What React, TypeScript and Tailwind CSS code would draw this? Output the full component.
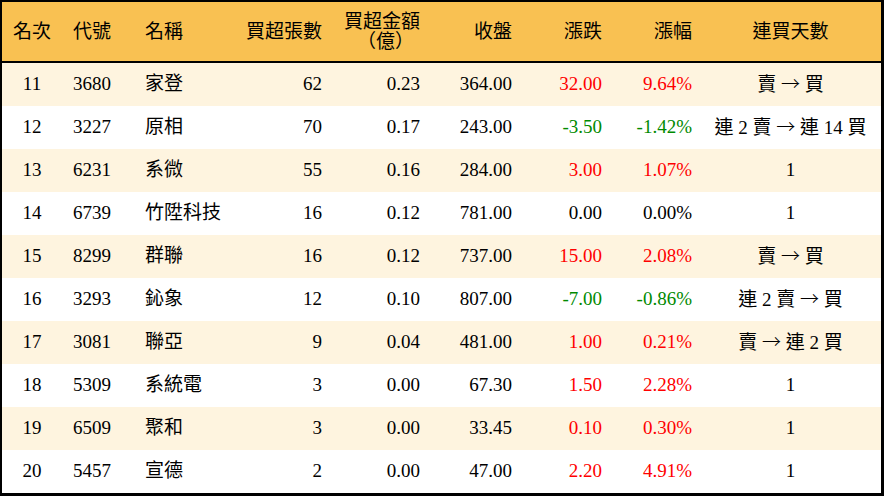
type Row = {
  rank: number;
  code: string;
  name: string;
  lots: number;
  amount: string;
  close: string;
  change: string;
  pct: string;
  streak: string;
};

const rows: Row[] = [
  { rank: 11, code: "3680", name: "家登", lots: 62, amount: "0.23", close: "364.00", change: "32.00", pct: "9.64%", streak: "賣 → 買" },
  { rank: 12, code: "3227", name: "原相", lots: 70, amount: "0.17", close: "243.00", change: "-3.50", pct: "-1.42%", streak: "連 2 賣 → 連 14 買" },
  { rank: 13, code: "6231", name: "系微", lots: 55, amount: "0.16", close: "284.00", change: "3.00", pct: "1.07%", streak: "1" },
  { rank: 14, code: "6739", name: "竹陞科技", lots: 16, amount: "0.12", close: "781.00", change: "0.00", pct: "0.00%", streak: "1" },
  { rank: 15, code: "8299", name: "群聯", lots: 16, amount: "0.12", close: "737.00", change: "15.00", pct: "2.08%", streak: "賣 → 買" },
  { rank: 16, code: "3293", name: "鈊象", lots: 12, amount: "0.10", close: "807.00", change: "-7.00", pct: "-0.86%", streak: "連 2 賣 → 買" },
  { rank: 17, code: "3081", name: "聯亞", lots: 9, amount: "0.04", close: "481.00", change: "1.00", pct: "0.21%", streak: "賣 → 連 2 買" },
  { rank: 18, code: "5309", name: "系統電", lots: 3, amount: "0.00", close: "67.30", change: "1.50", pct: "2.28%", streak: "1" },
  { rank: 19, code: "6509", name: "聚和", lots: 3, amount: "0.00", close: "33.45", change: "0.10", pct: "0.30%", streak: "1" },
  { rank: 20, code: "5457", name: "宣德", lots: 2, amount: "0.00", close: "47.00", change: "2.20", pct: "4.91%", streak: "1" },
];

const grid = "grid grid-cols-[60px_73px_100px_95px_98px_92px_90px_90px_181px] items-center";

function tone(v: string) {
  if (v.startsWith("-")) return "text-[#008a00]";
  if (parseFloat(v) > 0) return "text-[#ff0000]";
  return "text-black";
}

// the arrow in the streak column is em-wide in the original, so take it from the CJK font
function Streak({ text }: { text: string }) {
  const parts = text.split("→");
  if (parts.length < 2) return <>{text}</>;
  return (
    <>
      {parts[0]}
      <span className="[font-family:'Noto_Sans_CJK_TC',sans-serif] font-light">→</span>
      {parts[1]}
    </>
  );
}

export default function App() {
  return (
    <div
      className="w-[884px] h-[496px] bg-white text-black text-[19px] border-t-2 border-l-2 border-r-[3px] border-b-[3px] border-black"
      style={{ fontFamily: '"Liberation Serif", "Noto Sans CJK TC", serif' }}
    >
      <div className={`${grid} h-[61px] bg-[#f9c152] border-b-2 border-black leading-[20px]`}>
        <div className="text-center">名次</div>
        <div className="pl-[11px]">代號</div>
        <div className="pl-[10px]">名稱</div>
        <div className="text-right pr-[8px]">買超張數</div>
        <div className="pr-[8px] flex flex-col items-end">
          <span>買超金額</span>
          <span className="pr-[6px]">（億）</span>
        </div>
        <div className="text-right pr-[8px]">收盤</div>
        <div className="text-right pr-[8px]">漲跌</div>
        <div className="text-right pr-[8px]">漲幅</div>
        <div className="text-center">連買天數</div>
      </div>
      {rows.map((r, i) => (
        <div key={r.rank} className={`${grid} h-[43px] ${i % 2 === 0 ? "bg-[#fef4df]" : "bg-white"}`}>
          <div className="text-center">{r.rank}</div>
          <div className="pl-[11px]">{r.code}</div>
          <div className="pl-[10px]">{r.name}</div>
          <div className="text-right pr-[8px]">{r.lots}</div>
          <div className="text-right pr-[8px]">{r.amount}</div>
          <div className="text-right pr-[8px]">{r.close}</div>
          <div className={`text-right pr-[8px] ${tone(r.change)}`}>{r.change}</div>
          <div className={`text-right pr-[8px] ${tone(r.pct)}`}>{r.pct}</div>
          <div className="text-center whitespace-pre">
            <Streak text={r.streak} />
          </div>
        </div>
      ))}
    </div>
  );
}
